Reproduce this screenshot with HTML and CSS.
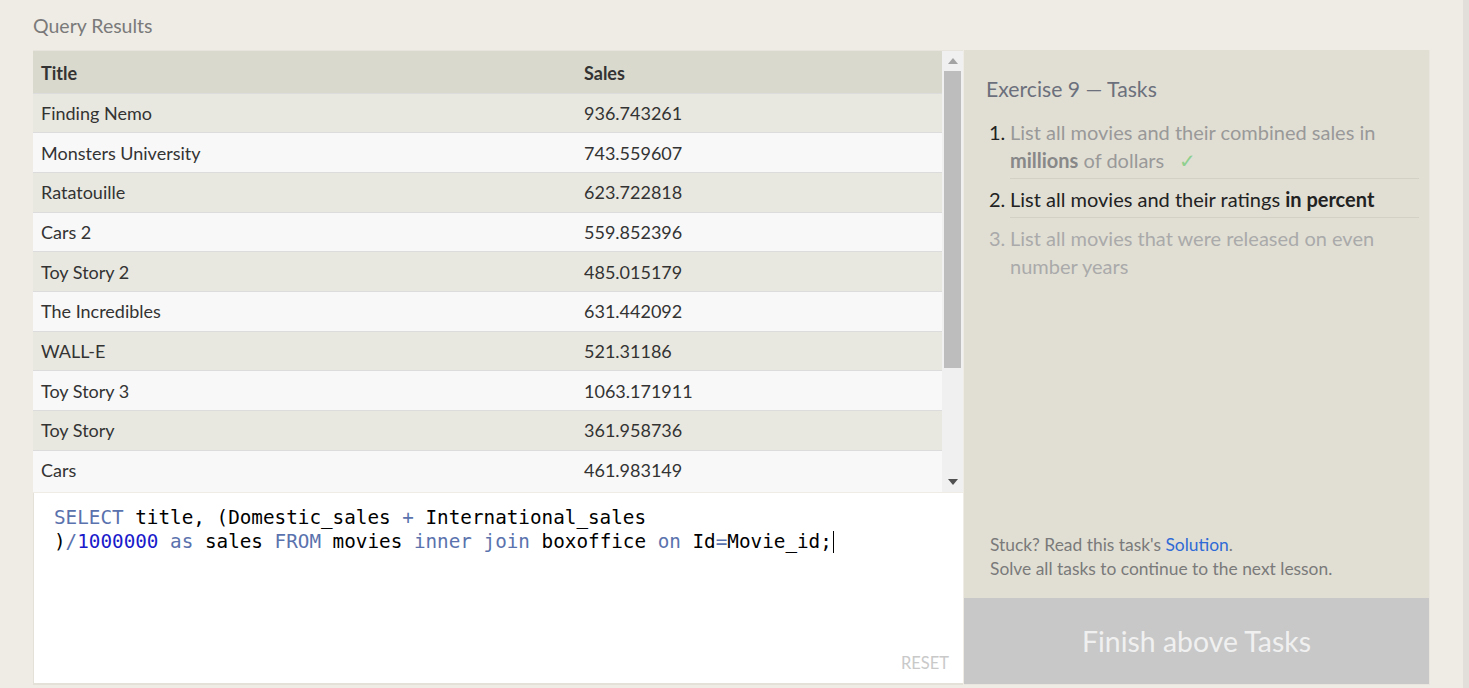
FILE: index.html
```html
<!DOCTYPE html>
<html>
<head>
<meta charset="utf-8">
<link rel="stylesheet" href="styles.css">
</head>
<body>
<div class="page">
  <div class="main">
    <div class="section-title">Query Results</div>
    <div class="content">
      <div class="left">
        <div class="results">
          <table class="tbl">
            <colgroup><col class="col1"><col class="col2"></colgroup>
            <thead>
              <tr><th>Title</th><th>Sales</th></tr>
            </thead>
            <tbody>
              <tr><td>Finding Nemo</td><td>936.743261</td></tr>
              <tr><td>Monsters University</td><td>743.559607</td></tr>
              <tr><td>Ratatouille</td><td>623.722818</td></tr>
              <tr><td>Cars 2</td><td>559.852396</td></tr>
              <tr><td>Toy Story 2</td><td>485.015179</td></tr>
              <tr><td>The Incredibles</td><td>631.442092</td></tr>
              <tr><td>WALL-E</td><td>521.31186</td></tr>
              <tr><td>Toy Story 3</td><td>1063.171911</td></tr>
              <tr><td>Toy Story</td><td>361.958736</td></tr>
              <tr><td>Cars</td><td>461.983149</td></tr>
            </tbody>
          </table>
          <div class="scrollbar">
            <div class="sb-btn"><svg width="10" height="6" viewBox="0 0 10 6"><path d="M0 6 L5 0 L10 6 Z" fill="#a3a3a3"/></svg></div>
            <div class="sb-thumb"></div>
            <div class="sb-track"></div>
            <div class="sb-btn"><svg width="10" height="6" viewBox="0 0 10 6"><path d="M0 0 L10 0 L5 6 Z" fill="#505050"/></svg></div>
          </div>
        </div>
        <div class="editor">
          <div class="code"><span class="kw">SELECT</span> title, (Domestic_sales <span class="op">+</span> International_sales<br>)<span class="op">/</span><span class="num">1000000</span> <span class="kw">as</span> sales <span class="kw">FROM</span> movies <span class="kw">inner join</span> boxoffice <span class="kw">on</span> Id<span class="op">=</span>Movie_id;<span class="caret"></span></div>
          <div class="reset">RESET</div>
        </div>
      </div>
      <div class="right">
        <div class="tasks">
          <div class="tasks-title">Exercise 9 — Tasks</div>
          <ol class="task-list">
            <li class="task done"><span class="tnum">1.</span><span class="ttext">List all movies and their combined sales in <b>millions</b> of dollars <span class="check">✓</span></span></li>
            <li class="task active"><span class="tnum">2.</span><span class="ttext">List all movies and their ratings <b>in percent</b></span></li>
            <li class="task todo"><span class="tnum">3.</span><span class="ttext">List all movies that were released on even number years</span></li>
          </ol>
          <div class="spacer"></div>
          <div class="help">Stuck? Read this task's <span class="link">Solution</span>.<br>Solve all tasks to continue to the next lesson.</div>
        </div>
        <div class="finish">Finish above Tasks</div>
      </div>
    </div>
  </div>
  <div class="page-strip"></div>
</div>
</body>
</html>
```

FILE: styles.css
```css
html, body {
  margin: 0;
  padding: 0;
  height: 100%;
}
body {
  background: #efece5;
  font-family: "Lato", "Noto Sans", sans-serif;
  color: #333;
}
.page {
  display: flex;
  height: 688px;
  overflow: hidden;
}
.main {
  flex: 1;
  padding-left: 33px;
}
.page-strip {
  width: 6px;
  background: #e2deda;
}
.section-title {
  font-size: 19.5px;
  line-height: 24px;
  color: #7a7a7a;
  padding-top: 14px;
  height: 36px;
}
.content {
  display: flex;
  gap: 1px;
}
.left {
  width: 930px;
  display: flex;
  flex-direction: column;
}
.results {
  display: flex;
  height: 442px;
  overflow: hidden;
  border-top: 1px solid #e6e4dc;
  box-sizing: border-box;
  background: #f8f8f8;
}
.tbl {
  width: 909px;
  table-layout: fixed;
  border-collapse: collapse;
  font-size: 18px;
  align-self: flex-start;
}
.col1 { width: 543px; }
.col2 { width: 366px; }
.tbl th, .tbl td {
  text-align: left;
  padding: 0 8px;
  white-space: nowrap;
}
.tbl thead tr {
  background: #d9d9cd;
  height: 42px;
}
.tbl th {
  font-weight: 700;
  color: #333;
  padding-top: 2px;
}
.tbl tbody tr {
  height: 39.7px;
  border-top: 1px solid #dcdcdc;
  color: #333;
}
.tbl tbody tr:nth-child(odd) {
  background: #e9e8e0;
}
.tbl tbody tr:nth-child(even) {
  background: #f8f8f8;
}
.scrollbar {
  width: 21px;
  background: #f0f0f0;
  display: flex;
  flex-direction: column;
  align-items: center;
}
.sb-btn {
  height: 20px;
  display: flex;
  align-items: center;
  justify-content: center;
  width: 100%;
}
.sb-thumb {
  width: 17px;
  height: 297px;
  background: #bdbdbd;
}
.sb-track {
  flex: 1;
}
.editor {
  height: 192px;
  background: #fff;
  border-left: 1px solid #e4e1d9;
  border-bottom: 2px solid #e4e1d9;
  box-sizing: border-box;
  display: flex;
  flex-direction: column;
  margin-top: 1px;
}
.code {
  flex: 1;
  padding: 13px 0 0 20px;
  font-family: "DejaVu Sans Mono", "Liberation Mono", monospace;
  font-size: 19.3px;
  line-height: 24px;
  color: #000;
  white-space: nowrap;
}
.kw { color: #5a72ad; }
.op { color: #5a72ad; }
.num { color: #1a1acb; }
.caret {
  display: inline-block;
  width: 1px;
  height: 22px;
  background: #000;
  vertical-align: -5px;
  margin-left: 1px;
}
.reset {
  align-self: flex-end;
  font-size: 16.5px;
  color: #c9c9c9;
  padding: 0 14px 10px 0;
  line-height: 20px;
}
.right {
  width: 466px;
  height: 635px;
  display: flex;
  flex-direction: column;
  border-right: 1px solid #e8e6de;
  border-bottom: 1px solid #e8e6de;
  box-sizing: border-box;
}
.tasks {
  flex: 1;
  background: #e1dfd4;
  padding: 25px 10px 0 22px;
  display: flex;
  flex-direction: column;
}
.tasks-title {
  font-size: 21.2px;
  line-height: 28px;
  color: #6c707c;
}
.task-list {
  list-style: none;
  margin: 15px 0 0 0;
  padding: 0;
}
.task {
  display: flex;
  font-size: 20px;
  line-height: 28px;
  padding: 0 0 4px 3px;
}
.task + .task {
  padding-top: 6px;
}
.tnum {
  width: 21px;
  flex-shrink: 0;
}
.ttext {
  flex: 1;
  border-bottom: 1px solid #d3d1c6;
  padding-bottom: 4px;
  margin-bottom: -4px;
}
.task.todo .ttext { border-bottom: none; }
.task.done .tnum { color: #222; }
.task.done .ttext { color: #999; }
.task.done b { color: #888; }
.task.active { color: #222; }
.task.todo { color: #aaa; }
.check {
  color: #8fd08f;
  margin-left: 10px;
}
.spacer { flex: 1; }
.help {
  font-size: 17.4px;
  line-height: 24px;
  color: #7a7a7a;
  padding-left: 4px;
  margin-bottom: 17px;
}
.link { color: #2f6ad6; }
.finish {
  height: 86px;
  background: #c8c8c8;
  color: #f0f0f0;
  font-size: 28.4px;
  display: flex;
  align-items: center;
  justify-content: center;
}
```
